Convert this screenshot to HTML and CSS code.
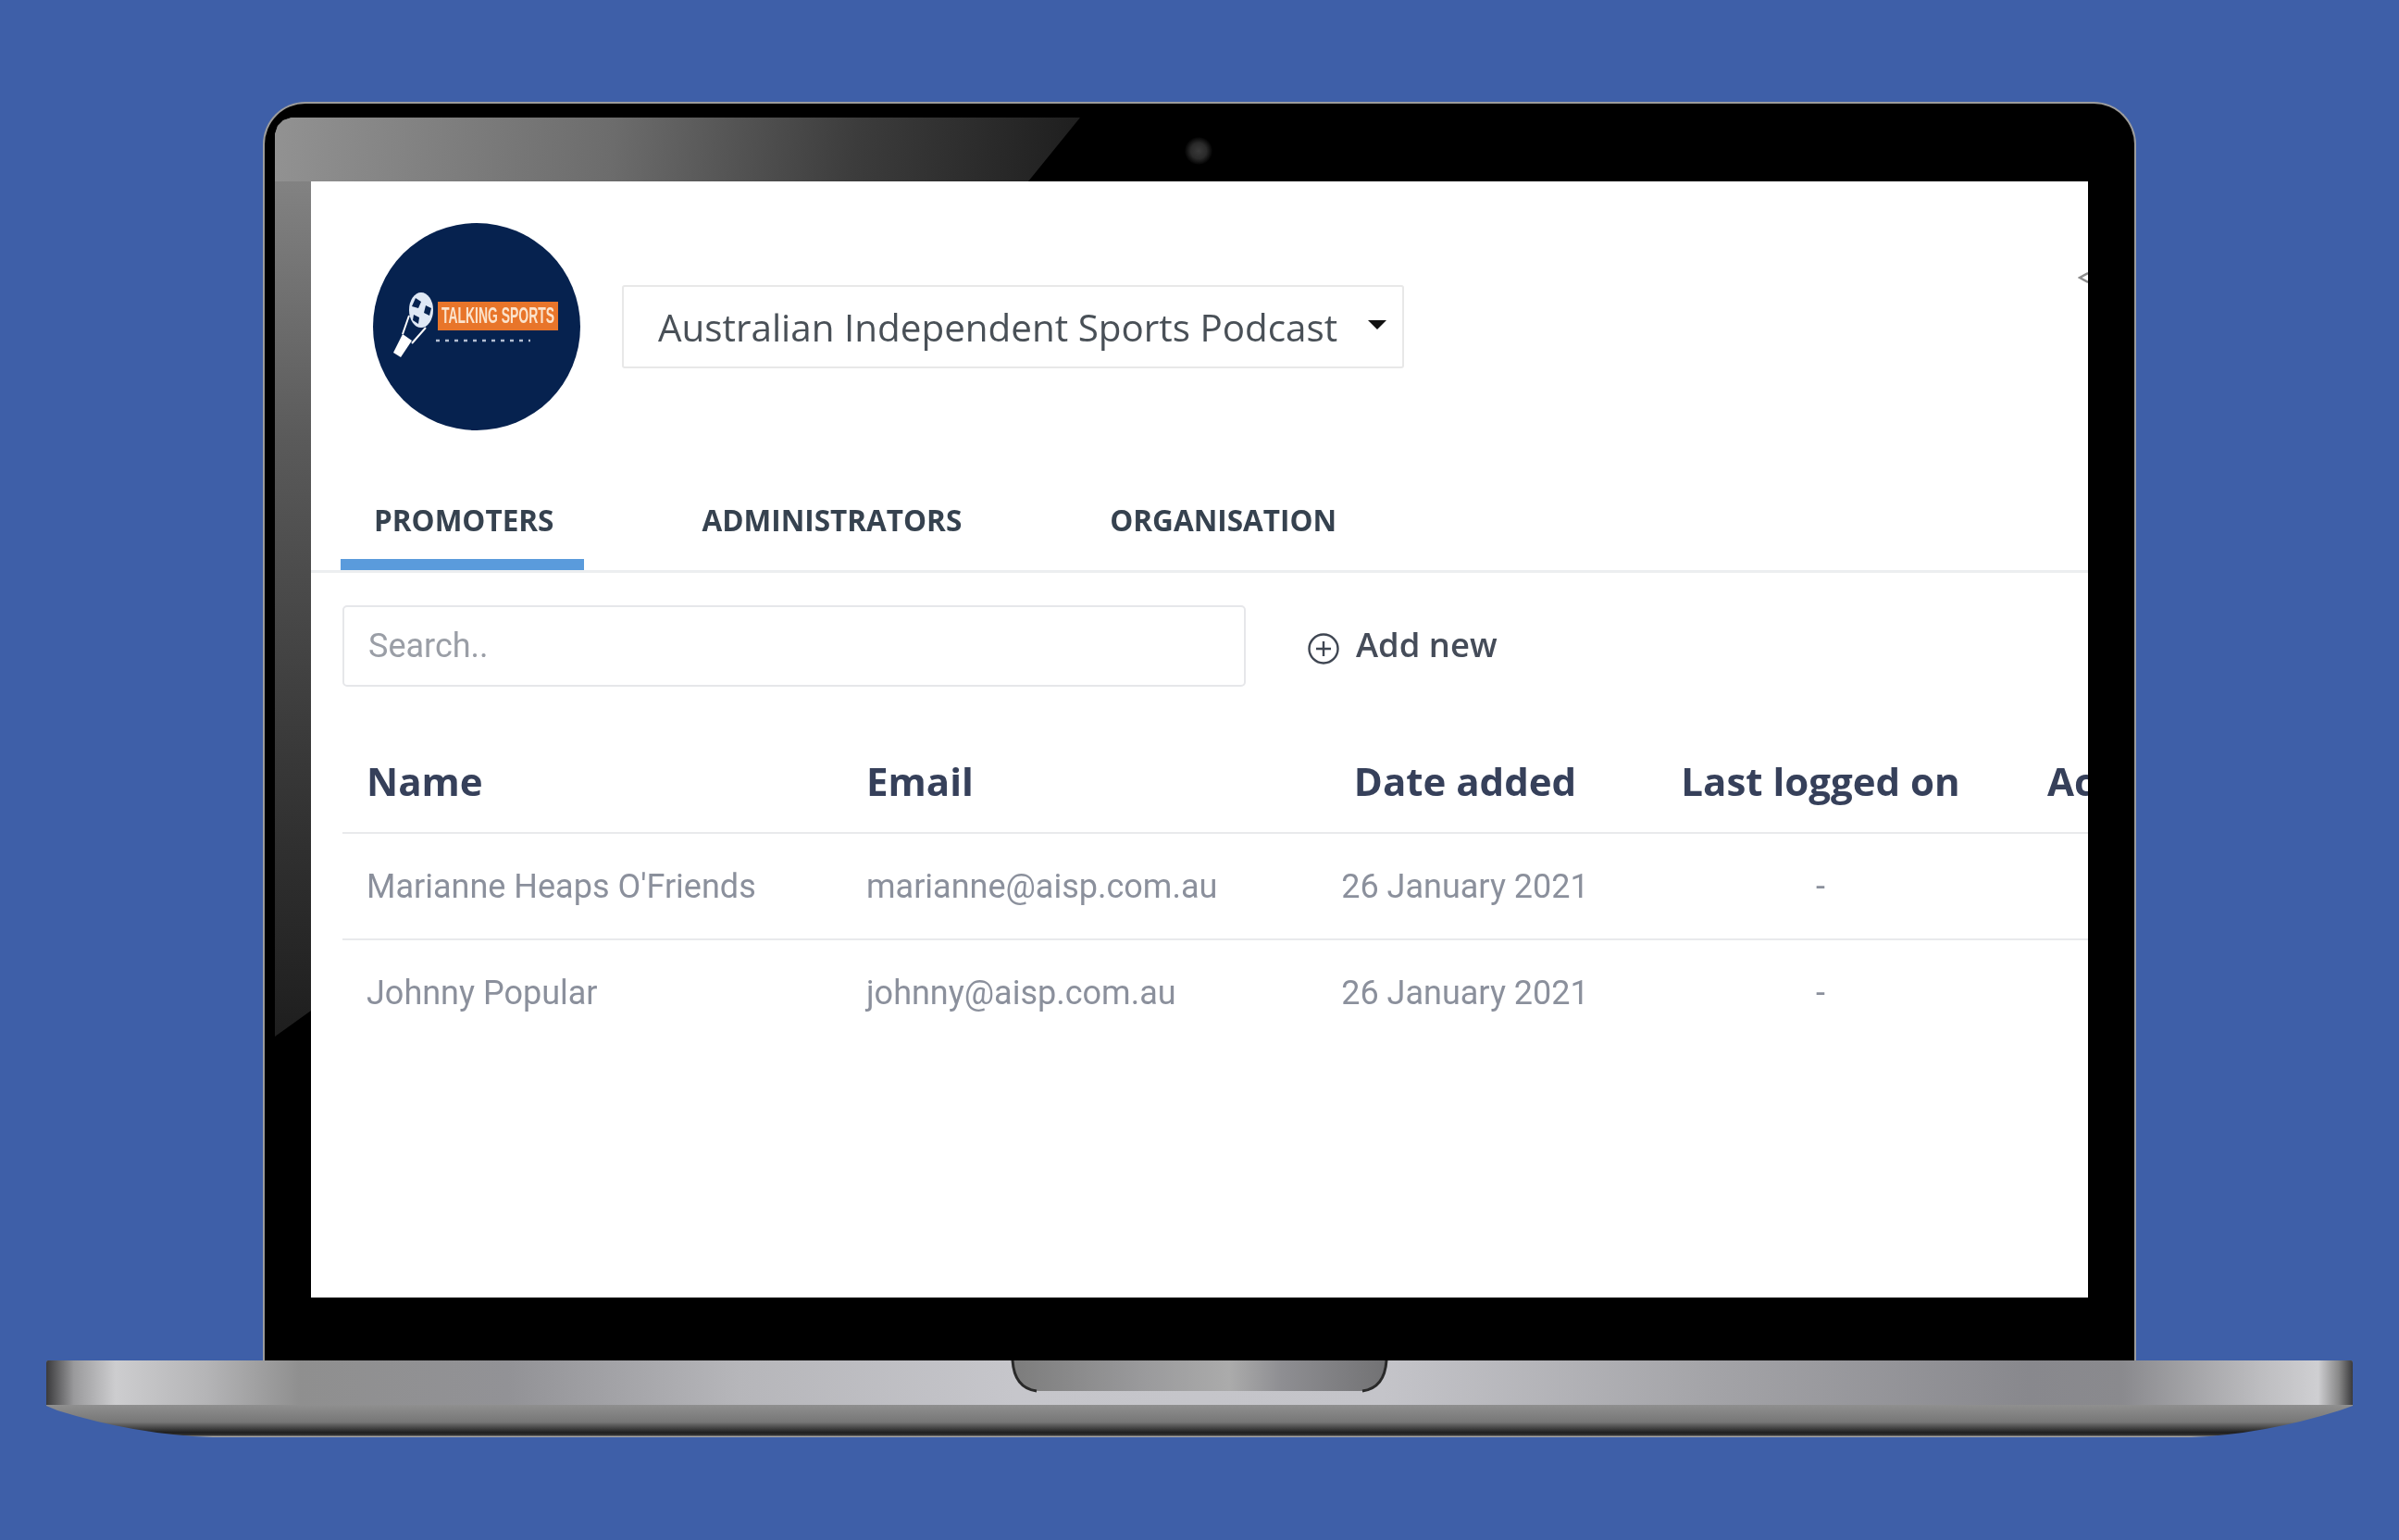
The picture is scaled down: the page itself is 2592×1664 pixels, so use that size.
FILE: index.html
```html
<!DOCTYPE html>
<html lang="en">
<head>
  <meta charset="UTF-8">
  <title>Promoters</title>
  <link rel="stylesheet" href="styles.css">
</head>
<body>
  <div class="laptop">
    <div class="lid">
      <div class="glare"></div>
      <div class="camera"></div>
      <div class="screen">
        <svg class="edge-arrow" width="12" height="20" viewBox="0 0 12 20"><path d="M11 5 2 10l9 5" fill="none" stroke="#8c8c8c" stroke-width="2.5"/></svg>

        <div class="org-row">
          <svg class="org-logo" width="226" height="226" viewBox="0 0 226 226">
            <circle cx="113" cy="113" r="112" fill="#06224f"/>
            <rect x="71" y="86" width="130" height="31" fill="#e8752a"/>
            <text x="136" y="109" class="logo-title" text-anchor="middle" textLength="122" lengthAdjust="spacingAndGlyphs">TALKING SPORTS</text>
            <path d="M69 128h102" stroke="#dfe6f2" stroke-width="2.5" stroke-dasharray="4 6" opacity="0.8"/>
            <ellipse cx="53" cy="95" rx="13" ry="19" fill="#dfe8f5"/>
            <path d="M47 82l6 4-3 7-7-2zM58 90l6 3-2 8-6-3zM45 100l6 3-1 7-6-4z" fill="#06224f"/>
            <path d="M33 121 23 141l8 5 12-18z" fill="#fff"/>
            <path d="M40 101 33 121M58 114 43 131" stroke="#fff" stroke-width="2" fill="none"/>
          </svg>
          <div class="org-select">
            <span>Australian Independent Sports Podcast</span>
            <i class="caret"></i>
          </div>
        </div>

        <div class="tabs">
          <a class="tab active">PROMOTERS</a>
          <a class="tab">ADMINISTRATORS</a>
          <a class="tab">ORGANISATION</a>
        </div>

        <div class="toolbar">
          <div class="search">Search..</div>
          <div class="add-new">
            <svg width="36" height="36" viewBox="0 0 36 36"><circle cx="18" cy="18" r="15.5" fill="none" stroke="#3f4652" stroke-width="2.4"/><path d="M18 10v16M10 18h16" stroke="#3f4652" stroke-width="2.4"/></svg>
            <span>Add new</span>
          </div>
        </div>

        <table class="people">
          <thead>
            <tr>
              <th class="col-name">Name</th>
              <th class="col-email">Email</th>
              <th class="col-date">Date added</th>
              <th class="col-last">Last logged on</th>
              <th class="col-actions">Actions</th>
            </tr>
          </thead>
          <tbody>
            <tr>
              <td class="col-name">Marianne Heaps O'Friends</td>
              <td class="col-email">marianne@aisp.com.au</td>
              <td class="col-date">26 January 2021</td>
              <td class="col-last">-</td>
              <td class="col-actions"></td>
            </tr>
            <tr>
              <td class="col-name">Johnny Popular</td>
              <td class="col-email">johnny@aisp.com.au</td>
              <td class="col-date">26 January 2021</td>
              <td class="col-last">-</td>
              <td class="col-actions"></td>
            </tr>
          </tbody>
        </table>
      </div>
    </div>

    <svg class="base" width="2492" height="84" viewBox="0 0 2492 84">
      <defs>
        <linearGradient id="baseTop" x1="0" x2="1" y1="0" y2="0">
          <stop offset="0" stop-color="#3a3a3c"/>
          <stop offset="0.012" stop-color="#9a9a9c"/>
          <stop offset="0.03" stop-color="#cdcdcf"/>
          <stop offset="0.07" stop-color="#b4b4b6"/>
          <stop offset="0.11" stop-color="#8f8f8f"/>
          <stop offset="0.2" stop-color="#929296"/>
          <stop offset="0.3" stop-color="#b6b6ba"/>
          <stop offset="0.42" stop-color="#c6c6cb"/>
          <stop offset="0.58" stop-color="#c4c4c9"/>
          <stop offset="0.72" stop-color="#a4a4a8"/>
          <stop offset="0.86" stop-color="#88888d"/>
          <stop offset="0.9" stop-color="#8a8a8e"/>
          <stop offset="0.96" stop-color="#bdbdc0"/>
          <stop offset="0.985" stop-color="#cfcfd2"/>
          <stop offset="0.994" stop-color="#888"/>
          <stop offset="1" stop-color="#3a3a3c"/>
        </linearGradient>
        <linearGradient id="baseLow" x1="0" x2="0" y1="0" y2="1">
          <stop offset="0.58" stop-color="#8f8f8f"/>
          <stop offset="0.8" stop-color="#777"/>
          <stop offset="0.94" stop-color="#1e1e1e"/>
          <stop offset="0.97" stop-color="#333"/>
          <stop offset="1" stop-color="#c4c4c4"/>
        </linearGradient>
        <linearGradient id="notch" x1="0" x2="1" y1="0" y2="0">
          <stop offset="0" stop-color="#7c7c7c"/>
          <stop offset="0.35" stop-color="#9a9a9c"/>
          <stop offset="0.58" stop-color="#ababab"/>
          <stop offset="0.72" stop-color="#8e8e92"/>
          <stop offset="1" stop-color="#727274"/>
        </linearGradient>
      </defs>
      <path d="M2 0H2490Q2492 0 2492 3V49L2478 54Q2395 80 2317 83H180Q95 80 12 54L0 49V3Q0 0 2 0Z" fill="url(#baseLow)"/>
      <path d="M2 0H2490Q2492 0 2492 3V48H0V3Q0 0 2 0Z" fill="url(#baseTop)"/>
      <path d="M1044 0H1448Q1446 33 1420 33H1072Q1046 33 1044 0Z" fill="url(#notch)"/>
      <path d="M1044 0Q1046 30 1070 33M1448 0Q1446 30 1422 33" fill="none" stroke="#2a2a2a" stroke-width="3"/>
    </svg>
  </div>
</body>
</html>
```

FILE: styles.css
```css
body {
  margin: 0;
  width: 2592px;
  height: 1664px;
  overflow: hidden;
  background-color: #3e5fa8;
}

.laptop {
  display: flex;
  flex-direction: column;
  align-items: center;
  padding-top: 110px;
}

.lid {
  position: relative;
  box-sizing: border-box;
  width: 2024px;
  height: 1360px;
  padding: 84px 50px 68px;
  background-color: #000;
  border: 2px solid #9c9c9c;
  border-bottom: none;
  border-radius: 46px 46px 0 0;
  overflow: hidden;
}

.glare {
  position: absolute;
  top: 15px;
  left: 11px;
  width: 870px;
  height: 993px;
  background:
    linear-gradient(95deg, #929292 0, #6c6c6c 42%, #3c3c3c 72%, #1e1e1e 100%) 0 0 / 100% 69px no-repeat,
    linear-gradient(180deg, #8c8c8c 0, #5a5a5a 35%, #383838 70%, #1e1e1e 100%) 0 0 / 39px 100% no-repeat;
  clip-path: polygon(0 18px, 3px 9px, 9px 3px, 18px 0, 870px 0, 814px 69px, 39px 69px, 39px 965px, 0 993px);
}

.camera {
  position: absolute;
  top: 36px;
  left: 994px;
  width: 30px;
  height: 30px;
  border-radius: 50%;
  background: radial-gradient(circle, #3a3a3a 0, #2a2a2a 40%, #000 72%);
}

.screen {
  position: relative;
  box-sizing: border-box;
  height: 1206px;
  padding: 44px 0 0 34px;
  background-color: #fff;
  color: #495057;
  font-family: "Open Sans", "Liberation Sans", sans-serif;
  overflow: hidden;
  filter: blur(0.6px);
}

.edge-arrow {
  position: absolute;
  top: 94px;
  right: -1px;
}

.org-row {
  display: flex;
  align-items: center;
  gap: 44px;
  padding-left: 32px;
}

.org-logo {
  display: block;
  flex-shrink: 0;
}

.org-select {
  box-sizing: border-box;
  display: flex;
  align-items: center;
  justify-content: space-between;
  width: 845px;
  height: 90px;
  padding: 0 17px 0 37px;
  border: 2px solid #e8e8e8;
  border-radius: 3px;
  font-size: 40.4px;
  white-space: nowrap;
}

.caret {
  width: 0;
  height: 0;
  margin-top: -4px;
  border-top: 10px solid #111;
  border-left: 10px solid transparent;
  border-right: 10px solid transparent;
}

.logo-title {
  font-family: "Liberation Sans", sans-serif;
  font-size: 23px;
  font-weight: 700;
  fill: #fbe3cc;
}

.tabs {
  display: flex;
  height: 118px;
  margin-left: -34px;
  margin-top: 32px;
  padding-left: 32px;
  border-bottom: 3px solid #eceef0;
}

.tab {
  box-sizing: border-box;
  height: 118px;
  padding: 44px 33px 0 36px;
  font-size: 31.5px;
  line-height: 40px;
  font-weight: 700;
  color: #36424f;
  white-space: nowrap;
}

.tab.active {
  border-bottom: 12px solid #5a9bdc;
}

.tab + .tab {
  margin-left: 91px;
}

.toolbar {
  display: flex;
  align-items: center;
  gap: 66px;
  margin-top: 35px;
}

.search {
  box-sizing: border-box;
  width: 976px;
  height: 88px;
  padding-left: 26px;
  border: 2px solid #e6e7ea;
  border-radius: 5px;
  font-family: Roboto, "Liberation Sans", sans-serif;
  font-size: 36px;
  line-height: 84px;
  color: #9a9ea6;
}

.add-new {
  display: flex;
  align-items: center;
  gap: 17px;
  font-size: 36.4px;
  font-weight: 600;
  color: #454c59;
}

.add-new svg {
  margin-top: 6px;
}

.add-new span {
  margin-top: -4px;
}

.people {
  table-layout: fixed;
  width: 1920px;
  margin-top: 45px;
  border-collapse: collapse;
}

.people th {
  height: 112px;
  padding: 0;
  font-size: 42px;
  font-weight: 700;
  color: #36405a;
  text-align: left;
  border-bottom: 2px solid #e9eaec;
  white-space: nowrap;
}

.people td {
  height: 113px;
  padding: 0;
  font-family: Roboto, "Liberation Sans", sans-serif;
  font-size: 36px;
  color: #8b909c;
  border-bottom: 2px solid #e9eaec;
  white-space: nowrap;
}

.people tbody tr:last-child td {
  border-bottom: none;
}

.col-name {
  width: 540px;
  padding-left: 26px !important;
}

.col-email {
  width: 440px;
}

.people .col-date {
  width: 414px;
  text-align: center;
}

.people .col-last {
  width: 354px;
  text-align: center;
}

.col-actions {
  padding-left: 68px !important;
}
```
